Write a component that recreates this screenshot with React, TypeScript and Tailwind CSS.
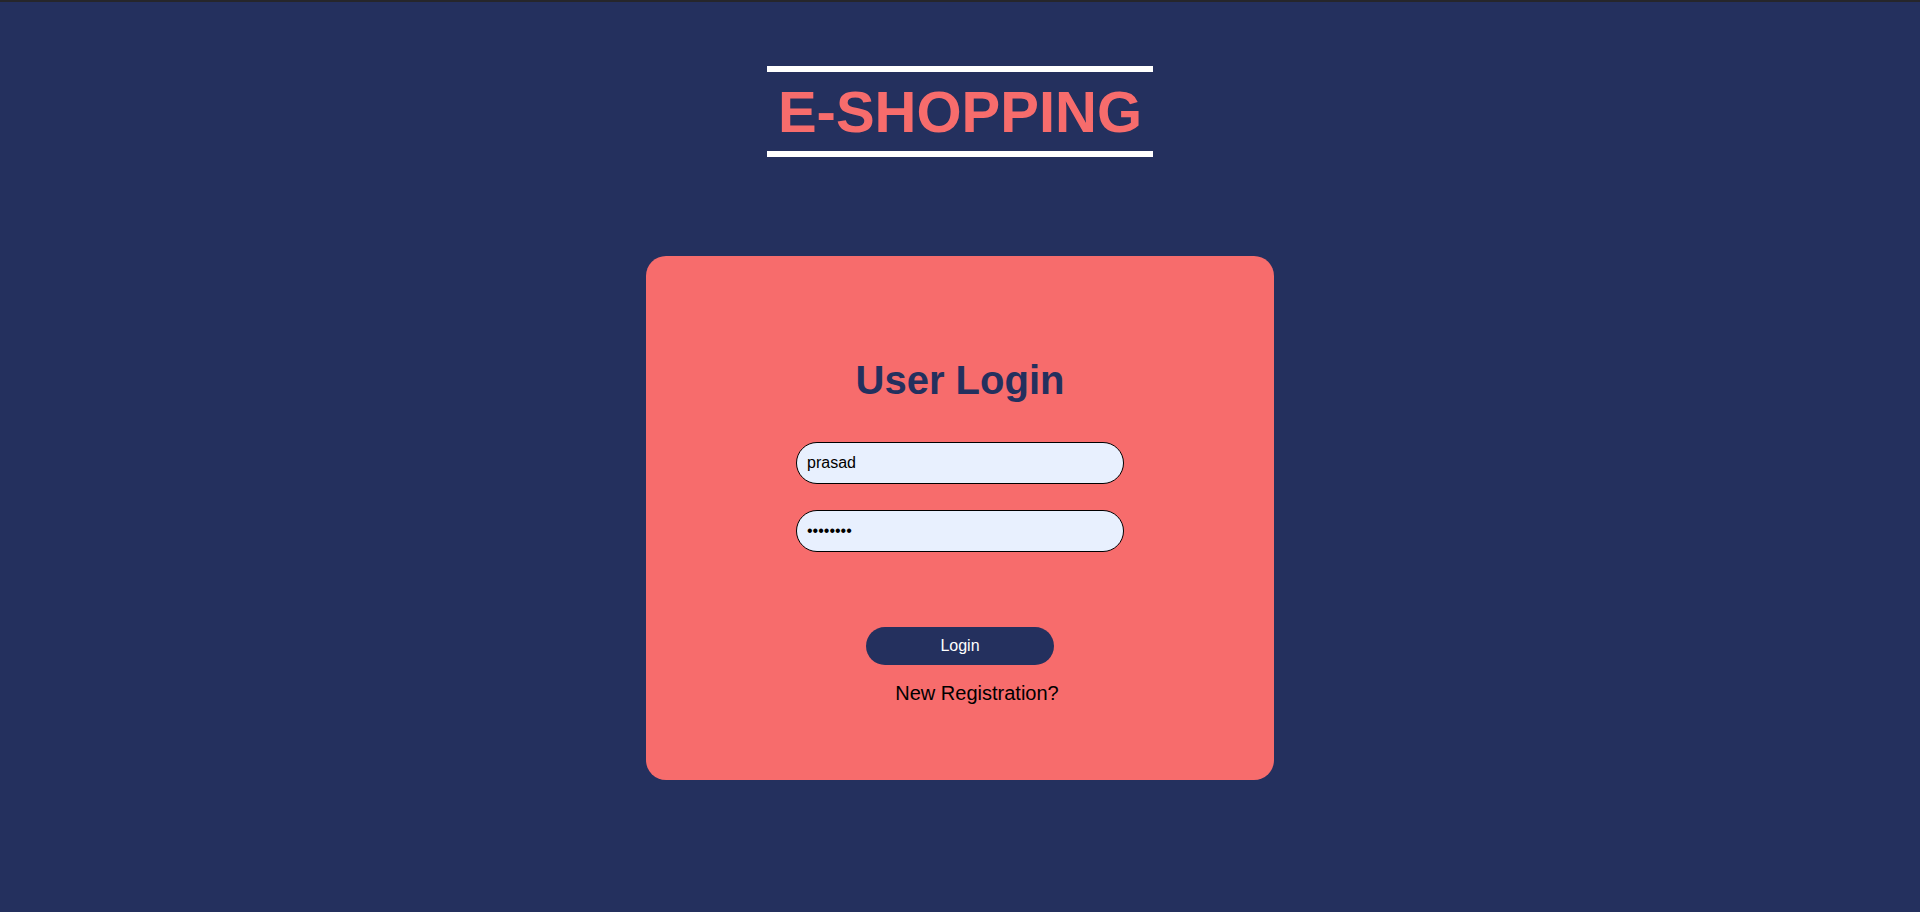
export default function App() {
  return (
    <div
      className="min-h-[912px] w-full bg-[#24305e] flex flex-col items-center"
      style={{ fontFamily: '"Liberation Sans", Arial, sans-serif' }}
    >
      <div className="h-[2px] w-full bg-[#26262b]" />
      <h1 className="mt-[64px] border-y-[6px] border-white px-[11px] text-[58px] leading-[79px] font-bold text-[#f76c6c]">
        E-SHOPPING
      </h1>

      <form
        className="mt-[99px] w-[628px] h-[524px] bg-[#f76c6c] rounded-[20px] flex flex-col items-center pt-[101px]"
        onSubmit={(e) => e.preventDefault()}
      >
        <h2 className="text-[40px] leading-[46px] font-bold text-[#24305e]">User Login</h2>

        <input
          className="mt-[39px] w-[328px] h-[42px] rounded-full border border-black bg-[#e8f0fe] pl-[10px] text-[16px] text-black outline-none"
          type="text"
          defaultValue="prasad"
        />
        <input
          className="mt-[26px] w-[328px] h-[42px] rounded-full border border-black bg-[#e8f0fe] pl-[10px] text-[16px] text-black outline-none"
          type="password"
          defaultValue="prasad12"
        />

        <button
          className="mt-[75px] w-[188px] h-[38px] rounded-full bg-[#24305e] text-white text-[16px]"
          type="submit"
        >
          Login
        </button>
        <a className="mt-[17px] pl-[34px] text-[20px] leading-[23px] text-black" href="#">
          New Registration?
        </a>
      </form>
    </div>
  )
}
